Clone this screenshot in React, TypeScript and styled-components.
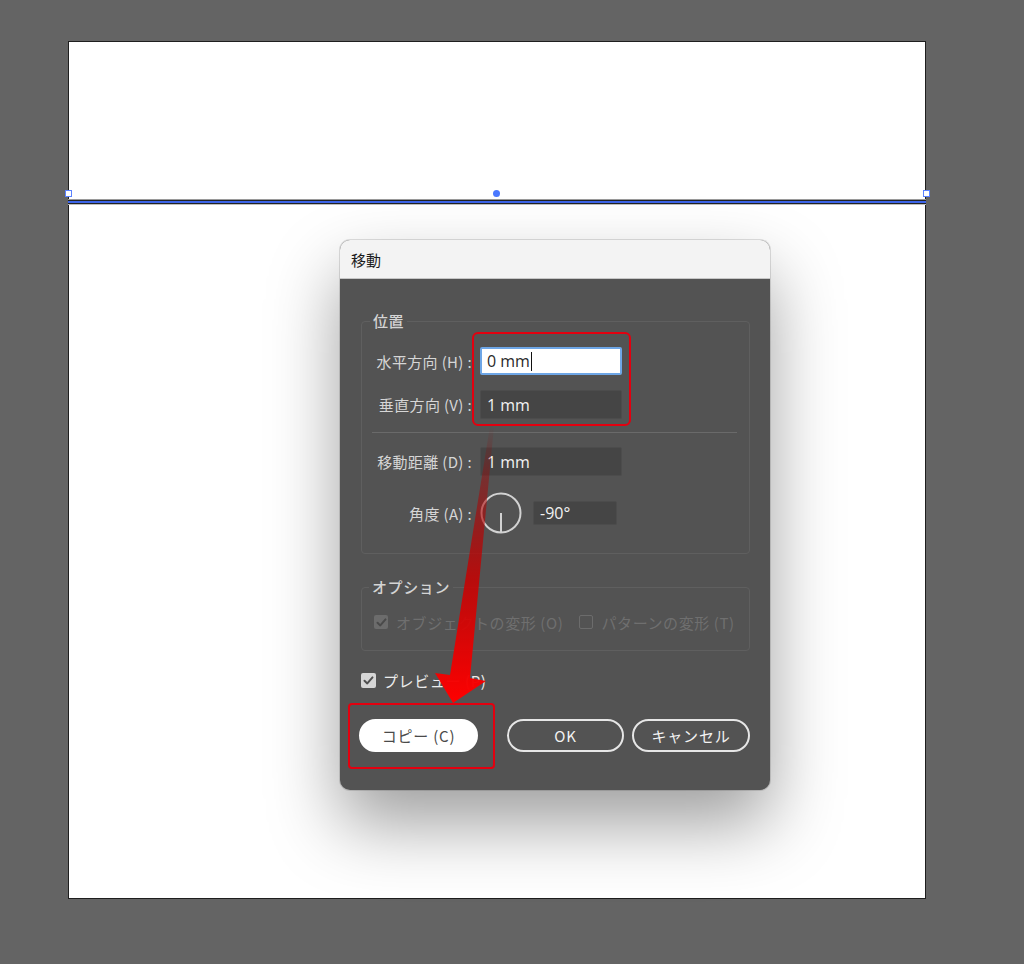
import React from "react";
import styled, { createGlobalStyle } from "styled-components";

const GlobalStyle = createGlobalStyle`
  html, body { margin: 0; padding: 0; }
  body {
    background: #646464;
    font-family: "Noto Sans CJK JP", "Noto Sans", sans-serif;
  }
  * { box-sizing: border-box; }
`;

const Stage = styled.div`
  height: 964px;
  padding: 41px 0 0 68px;
  overflow: hidden;
`;

const Artboard = styled.div`
  position: relative;
  width: 858px;
  height: 858px;
  background: #ffffff;
  border: 1px solid #1e1e1e;
`;

const PathLine = styled.div`
  position: absolute;
  left: -1px;
  right: -1px;
  top: 158px;
  height: 4px;
  background: #3c64e8;
  border-top: 1px solid #222;
  border-bottom: 1px solid #222;
  box-shadow: 0 -1px 0 #9a9a9a, 0 1px 0 #bdbdbd;
`;

const Handle = styled.div<{ $left: number }>`
  position: absolute;
  top: 148px;
  left: ${(p) => p.$left}px;
  width: 7px;
  height: 7px;
  background: #fff;
  border: 1.5px solid #5b82ff;
`;

const CenterDot = styled.div`
  position: absolute;
  top: 148px;
  left: 424px;
  width: 7px;
  height: 7px;
  border-radius: 50%;
  background: #4a78ff;
`;

const Dialog = styled.div`
  position: absolute;
  left: 271px;
  top: 198px;
  width: 430px;
  background: #535353;
  border-radius: 10px;
  box-shadow: 0 34px 70px rgba(0, 0, 0, 0.38), 0 0 0 1px rgba(0, 0, 0, 0.12);
`;

const TitleBar = styled.div`
  height: 39px;
  background: #f3f3f3;
  border-radius: 10px 10px 0 0;
  border-bottom: 1px solid #c6c6c6;
  display: flex;
  align-items: center;
  padding-left: 11px;
  font-size: 15px;
  color: #1c1c1c;
`;

const Body = styled.div`
  padding: 32px 20px 38px 21px;
  display: flex;
  flex-direction: column;
`;

const Group = styled.fieldset<{ $pad: string; $mt?: number }>`
  margin: ${(p) => p.$mt ?? 0}px 0 0 0;
  min-width: 0;
  border: 1px solid #5f5f5f;
  border-radius: 4px;
  padding: ${(p) => p.$pad};
`;

const Legend = styled.legend<{ $ml: number }>`
  margin-left: ${(p) => p.$ml}px;
  padding: 0 3px;
  font-size: 15px;
  line-height: 20px;
  letter-spacing: 0.6px;
  color: #d4d4d4;
  font-weight: 500;
`;

const FieldRow = styled.div<{ $mt?: number; $h: number }>`
  display: grid;
  grid-template-columns: 110px auto;
  column-gap: 8px;
  align-items: center;
  justify-content: start;
  height: ${(p) => p.$h}px;
  margin-top: ${(p) => p.$mt ?? 0}px;
`;

const Label = styled.span`
  text-align: right;
  font-size: 15px;
  letter-spacing: 0.35px;
  color: #d6d6d6;
  white-space: nowrap;
`;

const Field = styled.div<{ $focus?: boolean; $w: number; $h: number }>`
  width: ${(p) => p.$w}px;
  height: ${(p) => p.$h}px;
  display: flex;
  align-items: center;
  padding-left: ${(p) => (p.$focus ? 5 : 6)}px;
  font-size: 16px;
  font-family: "Open Sans", "Noto Sans", sans-serif;
  color: ${(p) => (p.$focus ? "#2a2a2a" : "#f2f2f2")};
  background: ${(p) => (p.$focus ? "#ffffff" : "#454545")};
  border: ${(p) => (p.$focus ? "2px solid #6ea6e6" : "1px solid #4c4c4c")};
  border-radius: 2px;
`;

const Caret = styled.span`
  display: inline-block;
  width: 1px;
  height: 19px;
  margin-left: 1px;
  background: #111;
`;

const Separator = styled.div`
  height: 1px;
  background: #6a6a6a;
  margin: 13px 12px 14px 10px;
`;

const AngleControls = styled.div`
  display: flex;
  align-items: center;
  gap: 11px;
`;

const OptionsRow = styled.div`
  display: flex;
  align-items: center;
  height: 20px;
  gap: 16px;
`;

const CheckItem = styled.label<{ $tone: "dim" | "bright" }>`
  display: flex;
  align-items: center;
  gap: ${(p) => (p.$tone === "bright" ? 7 : 8)}px;
  font-size: 15px;
  letter-spacing: 0.6px;
  color: ${(p) => (p.$tone === "bright" ? "#ececec" : "#6f6f6f")};
  white-space: nowrap;
`;

const Box = styled.span<{ $checked: boolean; $tone: "dim" | "bright" }>`
  width: ${(p) => (p.$tone === "bright" ? 15 : 14)}px;
  height: ${(p) => (p.$tone === "bright" ? 15 : 14)}px;
  border-radius: 2px;
  display: flex;
  align-items: center;
  justify-content: center;
  background: ${(p) =>
    p.$checked ? (p.$tone === "bright" ? "#d6d6d6" : "#6c6c6c") : "transparent"};
  border: ${(p) =>
    p.$checked ? "none" : `1.5px solid ${p.$tone === "bright" ? "#d6d6d6" : "#6c6c6c"}`};
`;

const PreviewRow = styled.div`
  display: flex;
  align-items: center;
  height: 20px;
  margin-top: 19px;
`;

const ButtonRow = styled.div`
  display: flex;
  align-items: center;
  margin-top: 29px;
  margin-left: -2px;
`;

const Button = styled.div<{ $primary?: boolean; $w: number; $ml: number }>`
  width: ${(p) => p.$w}px;
  height: 33px;
  margin-left: ${(p) => p.$ml}px;
  border-radius: 17px;
  display: flex;
  align-items: center;
  justify-content: center;
  font-size: 15px;
  font-weight: 400;
  letter-spacing: 0.8px;
  color: ${(p) => (p.$primary ? "#4a4a4a" : "#f2f2f2")};
  background: ${(p) => (p.$primary ? "#ffffff" : "transparent")};
  border: 2px solid ${(p) => (p.$primary ? "#ffffff" : "#e6e6e6")};
`;

const Callout = styled.div<{ $l: number; $t: number; $w: number; $h: number; $r: number }>`
  position: absolute;
  left: ${(p) => p.$l}px;
  top: ${(p) => p.$t}px;
  width: ${(p) => p.$w}px;
  height: ${(p) => p.$h}px;
  border: 2.5px solid #e3000f;
  border-radius: ${(p) => p.$r}px;
  pointer-events: none;
`;

const ArrowLayer = styled.svg`
  position: absolute;
  left: 0;
  top: 0;
  width: 430px;
  height: 550px;
  pointer-events: none;
`;

const Check = ({ color }: { color: string }) => (
  <svg width="11" height="11" viewBox="0 0 11 11">
    <path d="M1.5 5.8 L4.3 8.4 L9.5 2.4" fill="none" stroke={color} strokeWidth="2" strokeLinecap="round" strokeLinejoin="round" />
  </svg>
);

const Dial = () => (
  <svg width="42" height="42" viewBox="0 0 42 42">
    <circle cx="21" cy="21" r="19.5" fill="none" stroke="#d2d2d2" strokeWidth="2" />
    <line x1="21" y1="21" x2="21" y2="40" stroke="#d2d2d2" strokeWidth="2" />
  </svg>
);

export default function App() {
  return (
    <>
      <GlobalStyle />
      <Stage>
        <Artboard>
          <PathLine />
          <Handle $left={-4.5} />
          <CenterDot />
          <Handle $left={853.5} />

          <Dialog>
            <TitleBar>移動</TitleBar>
            <Body>
              <Group $pad="16px 0 19px 0">
                <Legend $ml={8}>位置</Legend>
                <FieldRow $h={28}>
                  <Label>水平方向 (H) :</Label>
                  <Field $focus $w={142} $h={28}>
                    0 mm<Caret />
                  </Field>
                </FieldRow>
                <FieldRow $h={29} $mt={15}>
                  <Label>垂直方向 (V) :</Label>
                  <Field $w={142} $h={29}>1 mm</Field>
                </FieldRow>
                <Separator />
                <FieldRow $h={29}>
                  <Label>移動距離 (D) :</Label>
                  <Field $w={142} $h={29}>1 mm</Field>
                </FieldRow>
                <FieldRow $h={42} $mt={16}>
                  <Label>角度 (A) :</Label>
                  <AngleControls>
                    <Dial />
                    <Field $w={84} $h={24}>-90°</Field>
                  </AngleControls>
                </FieldRow>
              </Group>

              <Group $pad="15px 12px 18px 12px" $mt={23}>
                <Legend $ml={-5}>オプション</Legend>
                <OptionsRow>
                  <CheckItem $tone="dim">
                    <Box $checked $tone="dim">
                      <Check color="#4a4a4a" />
                    </Box>
                    オブジェクトの変形 (O)
                  </CheckItem>
                  <CheckItem $tone="dim">
                    <Box $checked={false} $tone="dim" />
                    パターンの変形 (T)
                  </CheckItem>
                </OptionsRow>
              </Group>

              <PreviewRow>
                <CheckItem $tone="bright">
                  <Box $checked $tone="bright">
                    <Check color="#505050" />
                  </Box>
                  プレビュー (P)
                </CheckItem>
              </PreviewRow>

              <ButtonRow>
                <Button $primary $w={119} $ml={0}>コピー (C)</Button>
                <Button $w={117} $ml={29}>OK</Button>
                <Button $w={118} $ml={8}>キャンセル</Button>
              </ButtonRow>
            </Body>

            <Callout $l={132} $t={92} $w={159} $h={94} $r={6} />
            <Callout $l={8} $t={463} $w={147} $h={66} $r={4} />

            <ArrowLayer viewBox="0 0 430 550">
              <defs>
                <linearGradient id="arrowFade" gradientUnits="userSpaceOnUse" x1="0" y1="185" x2="0" y2="463">
                  <stop offset="0" stopColor="#8a0000" stopOpacity="0" />
                  <stop offset="0.2" stopColor="#a80000" stopOpacity="0.45" />
                  <stop offset="0.55" stopColor="#c80000" stopOpacity="0.85" />
                  <stop offset="1" stopColor="#ff0000" stopOpacity="1" />
                </linearGradient>
              </defs>
              <polygon
                points="150,186 154,186 130,438 146,441 113,463 95,433 110,435"
                fill="url(#arrowFade)"
              />
            </ArrowLayer>
          </Dialog>
        </Artboard>
      </Stage>
    </>
  );
}
